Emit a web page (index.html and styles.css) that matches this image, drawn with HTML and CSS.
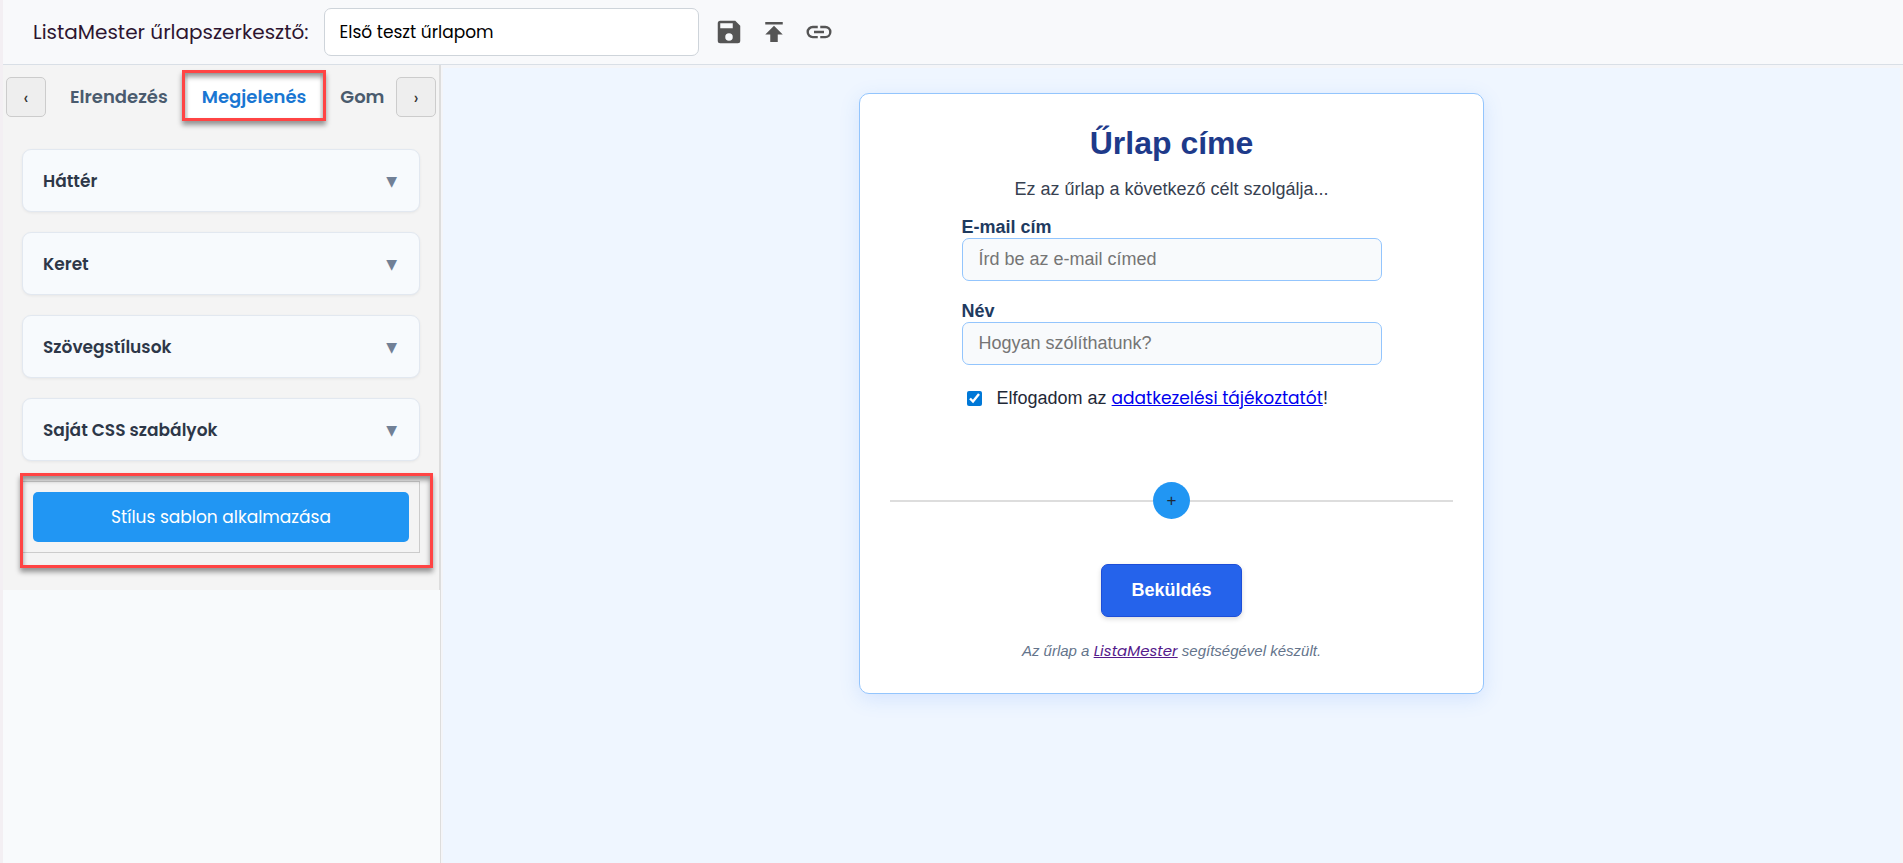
FILE: index.html
```html
<!DOCTYPE html>
<html lang="hu">

<head>
    <meta charset="UTF-8">
    <meta name="viewport" content="width=device-width, initial-scale=1.0">
    <title>ListaMester űrlapszerkesztő</title>
    <link rel="stylesheet" href="styles.css">
</head>

<body>
    <header class="topbar">
        <label class="topbar-title" for="form-name">ListaMester űrlapszerkesztő:</label>
        <input class="form-name" id="form-name" type="text" value="Első teszt űrlapom">
        <div class="tools">
            <button class="tool" type="button" aria-label="Mentés">
                <svg viewBox="0 0 24 24"><path d="M17 3H5a2 2 0 0 0-2 2v14a2 2 0 0 0 2 2h14a2 2 0 0 0 2-2V7l-4-4zm-5 16a3 3 0 1 1 0-6 3 3 0 0 1 0 6zm3-10H5V5h10v4z"/></svg>
            </button>
            <button class="tool" type="button" aria-label="Közzététel">
                <svg viewBox="0 0 24 24"><path d="M5 4v2h14V4H5zm0 10h4v6h6v-6h4l-7-7-7 7z"/></svg>
            </button>
            <button class="tool" type="button" aria-label="Hivatkozás">
                <svg viewBox="0 0 24 24"><path d="M3.9 12c0-1.71 1.39-3.1 3.1-3.1h4V7H7a5 5 0 0 0 0 10h4v-1.9H7c-1.71 0-3.1-1.39-3.1-3.1zM8 13h8v-2H8v2zm9-6h-4v1.9h4a3.1 3.1 0 0 1 0 6.2h-4V17h4a5 5 0 0 0 0-10z"/></svg>
            </button>
        </div>
    </header>

    <main class="editor">
        <aside class="sidebar">
            <div class="panel">
                <nav class="tab-bar">
                    <button class="tab-nav" type="button" aria-label="Előző">‹</button>
                    <div class="tabs">
                        <button class="tab" type="button">Elrendezés</button>
                        <button class="tab active marked" type="button">Megjelenés</button>
                        <button class="tab" type="button">Gom</button>
                    </div>
                    <button class="tab-nav" type="button" aria-label="Következő">›</button>
                </nav>
                <div class="sections">
                    <button class="section" type="button">Háttér<span class="caret">▼</span></button>
                    <button class="section" type="button">Keret<span class="caret">▼</span></button>
                    <button class="section" type="button">Szövegstílusok<span class="caret">▼</span></button>
                    <button class="section" type="button">Saját CSS szabályok<span class="caret">▼</span></button>
                </div>
                <div class="template-box marked">
                    <button class="template-btn" type="button">Stílus sablon alkalmazása</button>
                </div>
            </div>
        </aside>

        <section class="preview">
            <form class="form-card">
                <h1 class="form-title">Űrlap címe</h1>
                <p class="form-desc">Ez az űrlap a következő célt szolgálja...</p>
                <div class="field">
                    <label for="email">E-mail cím</label>
                    <input id="email" type="email" placeholder="Írd be az e-mail címed">
                </div>
                <div class="field">
                    <label for="name">Név</label>
                    <input id="name" type="text" placeholder="Hogyan szólíthatunk?">
                </div>
                <div class="consent">
                    <input id="consent" type="checkbox" checked>
                    <label for="consent">Elfogadom az <a href="#">adatkezelési tájékoztatót</a>!</label>
                </div>
                <div class="divider">
                    <button class="add" type="button">+</button>
                </div>
                <button class="submit" type="submit">Beküldés</button>
                <p class="credit">Az űrlap a <a href="#">ListaMester</a> segítségével készült.</p>
            </form>
        </section>
    </main>
</body>

</html>
```
FILE: styles.css
```css
* {
    box-sizing: border-box;
}

body {
    margin: 0;
    padding-left: 3px;
    min-height: 100vh;
    display: flex;
    flex-direction: column;
    background: #f3eff3;
    font-family: Poppins, Inter, sans-serif;
    font-size: 18px;
    color: #1f2937;
}

button,
input {
    font-family: inherit;
    font-size: inherit;
}

button {
    cursor: pointer;
}

/* header */
.topbar {
    display: flex;
    align-items: center;
    padding: 8px 30px;
    background: #f8f9fb;
    border-bottom: 1px solid #d9dfe6;
}

.topbar-title {
    font-size: 20px;
    color: #2d1530;
    margin-right: 15px;
}

.form-name {
    width: 375px;
    height: 48px;
    padding: 0 15px;
    font-size: 17px;
    color: #000;
    background: #fff;
    border: 1px solid #ced4da;
    border-radius: 7px;
}

.tools {
    display: flex;
    gap: 15px;
    margin-left: 15px;
}

.tool {
    width: 30px;
    height: 30px;
    padding: 0;
    border: 0;
    background: none;
}

.tool svg {
    display: block;
    width: 30px;
    height: 30px;
    fill: #555;
}

/* sidebar */
.editor {
    flex: 1;
    display: flex;
}

.sidebar {
    flex: none;
    width: 23%;
    min-width: 438px;
    background: #f8fafc;
    border-right: 1px solid #ddd;
}

.panel {
    padding-bottom: 37px;
    background: #f4f4f4;
    border-right: 1px solid #ddd;
}

.tab-bar {
    display: flex;
    align-items: center;
    padding: 0 3px;
    height: 64px;
}

.tab-nav {
    flex: none;
    width: 40px;
    height: 40px;
    padding: 0;
    color: #333;
    background: #eee;
    border: 1px solid #ccc;
    border-radius: 5px;
}

.tabs {
    flex: 1;
    min-width: 0;
    display: flex;
    align-items: center;
    gap: 6px;
    height: 64px;
    margin-left: 10px;
    padding-bottom: 2px;
}

.tab {
    flex: none;
    height: 44px;
    padding: 0 14px;
    border: 0;
    background: none;
    font-weight: 600;
    color: #4a5b6e;
}

.tab:last-child {
    padding-right: 0;
}

.tab.active {
    color: #1976d2;
    background: #fff;
}

/* red highlight frame */
.marked {
    position: relative;
}

.marked::after {
    content: "";
    position: absolute;
    inset: -4px -6px -3px -6px;
    border: 3px solid #ff4444;
    box-shadow: 0 4px 5px rgba(0, 0, 0, 0.4), inset 0 4px 5px rgba(0, 0, 0, 0.4);
    pointer-events: none;
}

.sections {
    display: flex;
    flex-direction: column;
    gap: 20px;
    padding: 20px 19px;
}

.section {
    display: flex;
    justify-content: space-between;
    align-items: center;
    height: 63px;
    padding: 0 22px 0 20px;
    font-size: 17px;
    font-weight: 600;
    color: #2d3748;
    background: #f7fafd;
    border: 1px solid #e2e8f0;
    border-radius: 9px;
    box-shadow: 0 1px 3px rgba(0, 0, 0, 0.06);
}

.caret {
    font-family: "DejaVu Sans", sans-serif;
    font-size: 14px;
    color: #718096;
}

.template-box {
    margin: 0 19px;
    padding: 10px;
    border: 1px solid #ccc;
}

.template-box.marked::after {
    inset: -9px -14px -16px -3px;
}

.template-btn {
    display: block;
    width: 100%;
    height: 50px;
    font-size: 17px;
    color: #fff;
    background: #2196f3;
    border: 0;
    border-radius: 5px;
}

/* preview */
.preview {
    flex: 1;
    padding: 25px 20px;
    background: #eff6ff;
    border: solid #f4f5f8;
    border-width: 3px 3px 0 2px;
}

.form-card {
    display: flex;
    flex-direction: column;
    align-items: center;
    max-width: 625px;
    margin: 0 auto;
    padding: 30px 30px 32px;
    font-family: "Liberation Sans", Arial, sans-serif;
    background: #fff;
    border: 1px solid #93c5fd;
    border-radius: 10px;
    box-shadow: 0 5px 20px rgba(59, 130, 246, 0.15);
}

.form-card a {
    font-family: Poppins, Inter, sans-serif;
    color: #0000ee;
}

.form-title {
    margin: 0;
    font-size: 32px;
    line-height: 38px;
    color: #1e3a8a;
}

.form-desc {
    margin: 17px 0;
    line-height: 20px;
    color: #374151;
}

.field {
    display: flex;
    flex-direction: column;
    width: 100%;
    max-width: 420px;
    margin-bottom: 19px;
}

.field label {
    line-height: 22px;
    font-weight: bold;
    color: #1e3a5f;
}

.field input {
    height: 43px;
    padding: 0 16px;
    background: #f8fafc;
    border: 1px solid #93c5fd;
    border-radius: 7px;
}

.field input::placeholder {
    color: #757575;
}

.consent {
    display: flex;
    align-items: center;
    width: 100%;
    max-width: 420px;
    height: 28px;
}

.consent input {
    width: 15px;
    height: 15px;
    margin: 0 15px 0 5px;
    accent-color: #0078d7;
}

.consent a {
    font-size: 17px;
}

.divider {
    align-self: stretch;
    display: flex;
    align-items: center;
    justify-content: center;
    margin: 70px 0 45px;
}

.divider::before,
.divider::after {
    content: "";
    flex: 1;
    height: 2px;
    background: #ddd;
}

.add {
    width: 37px;
    height: 37px;
    padding: 0;
    font-size: 17px;
    color: #1f2937;
    background: #2196f3;
    border: 0;
    border-radius: 50%;
}

.submit {
    height: 53px;
    padding: 0 29px;
    font-weight: bold;
    color: #fff;
    background: #2563eb;
    border: 1px solid #1d4ed8;
    border-radius: 7px;
    box-shadow: 0 2px 5px rgba(0, 0, 0, 0.15);
}

.credit {
    margin: 24px 0 0;
    font-size: 15px;
    line-height: 20px;
    font-style: italic;
    color: #64748b;
}

.form-card .credit a {
    color: #551a8b;
}
```
